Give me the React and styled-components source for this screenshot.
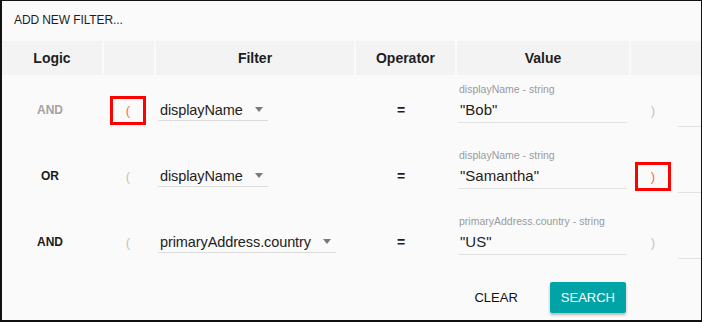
import React from 'react'
import styled, {createGlobalStyle} from 'styled-components'

const Global = createGlobalStyle`
    html, body {
        margin:0;
        padding:0;
        background:#fff;
    }
    * {
        box-sizing:border-box;
    }
`

const Panel = styled.div`
    width:702px;
    height:322px;
    overflow:hidden;
    background:#fafafa;
    border:1px solid #111;
    border-left-width:2px;
    border-bottom-width:2px;
    font-family:"Liberation Sans", Arial, sans-serif;
    color:#1e1e1e;
`

const Title = styled.div`
    height:40px;
    padding:12px 0 0 12px;
    font-size:12px;
    font-weight:500;
    letter-spacing:-0.1px;
    line-height:14px;
`

const COLS = '100px 50px 198px 99px 172px 46px 1fr';

const HeaderRow = styled.div`
    display:grid;
    grid-template-columns:${COLS};
    column-gap:2px;
    height:34px;
`

const HeadCell = styled.div`
    background:#f3f3f3;
    display:flex;
    align-items:center;
    justify-content:center;
    font-size:14px;
    font-weight:700;
    grid-column:${p => p.span ? `span ${p.span}` : 'auto'};
`

const Row = styled.div`
    display:grid;
    grid-template-columns:${COLS};
    column-gap:2px;
    align-items:center;
    height:66px;
    padding-top:4px;
`

const Logic = styled.div`
    text-align:center;
    font-size:12px;
    font-weight:600;
    color:${p => p.muted ? '#a3a3a3' : '#1a1a1a'};
    padding-right:4px;
`

const ParenCell = styled.div`
    display:flex;
    justify-content:center;
`

const Paren = styled.span`
    display:inline-flex;
    align-items:center;
    justify-content:center;
    width:${p => p.boxed ? '36px' : 'auto'};
    height:${p => p.boxed ? '29px' : 'auto'};
    border:${p => p.boxed ? '3px solid #f00' : 'none'};
    color:${p => p.boxed ? '#ff6a3d' : '#c2c2c2'};
    font-size:13px;
    margin-left:${p => p.shift || 0}px;
`

const SelectCell = styled.div`
    padding-left:2px;
`

const Select = styled.div`
    display:inline-flex;
    align-items:center;
    height:21px;
    padding:0 5px 0 2px;
    border-bottom:1px solid #dcdcdc;
    font-size:14.5px;
    letter-spacing:-0.1px;
    color:#222;
`

const Arrow = styled.span`
    margin-left:12px;
    width:0;
    height:0;
    border-left:4.5px solid transparent;
    border-right:4.5px solid transparent;
    border-top:5px solid #7a7a7a;
`

const Operator = styled.div`
    text-align:center;
    font-size:14px;
    font-weight:700;
    padding-right:9px;
`

const ValueCell = styled.div`
    padding:0 2px 15px 1px;
`

const Label = styled.div`
    font-size:10.5px;
    line-height:14px;
    color:#9a9a9a;
    padding-left:1px;
`

const Input = styled.div`
    height:27px;
    line-height:27px;
    padding-left:2px;
    font-size:15px;
    color:#222;
    border-bottom:1px solid #e2e2e2;
`

const ExtraCell = styled.div`
    align-self:start;
    padding-top:40px;
`

const ExtraInput = styled.div`
    height:8px;
    border-bottom:1px solid #e2e2e2;
    margin-left:-1px;
`

const Footer = styled.div`
    display:flex;
    justify-content:flex-end;
    align-items:center;
    gap:20px;
    padding:9px 75px 0 0;
`

const Button = styled.button`
    font-family:inherit;
    font-size:13px;
    font-weight:500;
    height:31px;
    padding:0 ${p => p.primary ? '11px' : '12px'};
    border:none;
    border-radius:2px;
    background:${p => p.primary ? '#00a4a6' : 'transparent'};
    color:${p => p.primary ? '#fff' : '#111'};
    box-shadow:${p => p.primary ? '0 2px 3px rgba(0,0,0,0.28)' : 'none'};
`

const rows = [
    {logic: 'AND', muted: true, field: 'displayName', value: '"Bob"', openBox: true},
    {logic: 'OR', field: 'displayName', value: '"Samantha"', closeBox: true},
    {logic: 'AND', field: 'primaryAddress.country', value: '"US"'},
]

const App = () => (
    <Panel>
        <Global/>
        <Title>ADD NEW FILTER...</Title>
        <HeaderRow>
            <HeadCell>Logic</HeadCell>
            <HeadCell/>
            <HeadCell>Filter</HeadCell>
            <HeadCell>Operator</HeadCell>
            <HeadCell>Value</HeadCell>
            <HeadCell span={2}/>
        </HeaderRow>
        {rows.map((r, i) => (
            <Row key={i}>
                <Logic muted={r.muted}>{r.logic}</Logic>
                <ParenCell>
                    <Paren boxed={r.openBox} shift={-2}>(</Paren>
                </ParenCell>
                <SelectCell>
                    <Select>{r.field}<Arrow/></Select>
                </SelectCell>
                <Operator>=</Operator>
                <ValueCell>
                    <Label>{r.field} - string</Label>
                    <Input>{r.value}</Input>
                </ValueCell>
                <ParenCell>
                    <Paren boxed={r.closeBox} shift={-2}>)</Paren>
                </ParenCell>
                <ExtraCell>
                    <ExtraInput/>
                </ExtraCell>
            </Row>
        ))}
        <Footer>
            <Button>CLEAR</Button>
            <Button primary>SEARCH</Button>
        </Footer>
    </Panel>
)

export default App
